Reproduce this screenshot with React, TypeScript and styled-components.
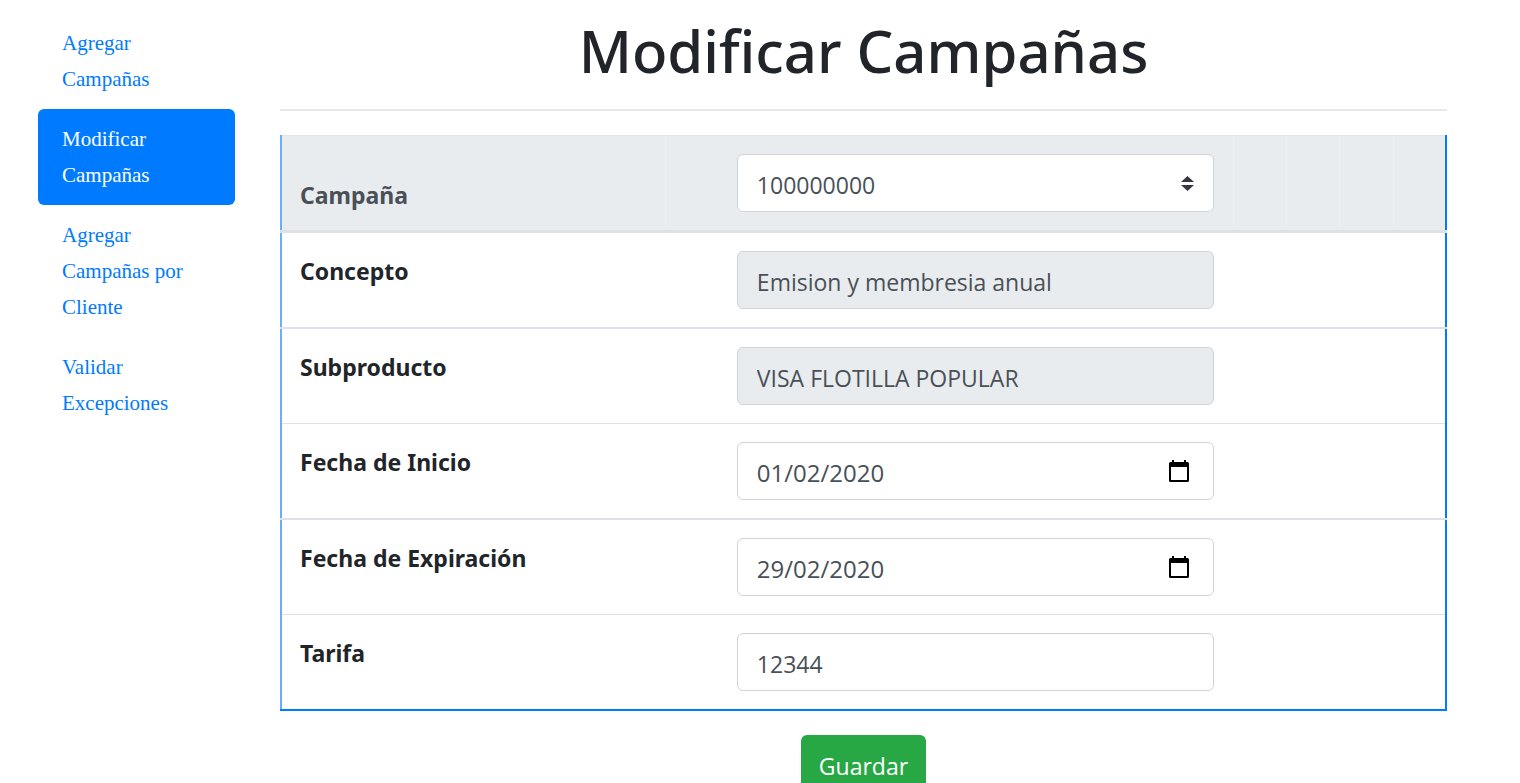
import React from "react";
import styled, { createGlobalStyle, css } from "styled-components";

const GlobalStyle = createGlobalStyle`
  *, *::before, *::after { box-sizing: border-box; }
  body {
    margin: 0;
    background: #fff;
    color: #212529;
    font-family: "Segoe UI", "Open Sans", sans-serif;
    font-size: 23px;
    line-height: 36px;
  }
`;

const Page = styled.div`
  display: flex;
  align-items: flex-start;
  gap: 45px;
  padding: 13px 73px 24px 38px;
`;

const Sidebar = styled.nav`
  display: flex;
  flex-direction: column;
  flex: 0 0 197px;
  font-family: "Times New Roman", "Liberation Serif", serif;
  font-size: 21px;
`;

const NavLink = styled.a<{ $active?: boolean }>`
  padding: 12px 24px;
  border-radius: 6px;
  color: ${(p) => (p.$active ? "#fff" : "#007bff")};
  background: ${(p) => (p.$active ? "#007bff" : "transparent")};
  text-decoration: none;
`;

const Main = styled.main`
  flex: 1;
  min-width: 0;
`;

const Title = styled.h1`
  margin: 0;
  padding-bottom: 20px;
  border-bottom: 2px solid #e9e9ea;
  font-family: "Segoe UI", "Noto Sans", sans-serif;
  font-size: 58px;
  font-weight: 500;
  line-height: 76px;
  text-align: center;
`;

const Form = styled.form`
  margin-top: 24px;
`;

const FormTable = styled.table`
  width: 100%;
  table-layout: fixed;
  border-collapse: collapse;
  border: 2px solid #007bff;
  border-top: 0;
  border-left-color: #6aadfb;
`;

const Column = styled.col<{ $share?: number }>`
  width: ${(p) => (p.$share ? `${p.$share}%` : "auto")};
`;

const HeadRow = styled.tr`
  background: #e9ecef;
  color: #495057;

  & > * {
    border-top: 1px solid #e4e7ea;
    border-bottom: 3px solid #dee2e6;
    vertical-align: bottom;
  }

  & > :nth-child(2),
  & > :nth-child(n + 4) {
    box-shadow: inset 1px 0 #edf0f2;
  }
`;

const BodyRow = styled.tr<{ $line: number }>`
  & > * {
    vertical-align: top;
    ${(p) => p.$line > 0 && css`border-bottom: ${p.$line}px solid #dee2e6;`}
  }
`;

const LabelCell = styled.th`
  padding: 18px;
  font-family: "Segoe UI", "Noto Sans", sans-serif;
  font-weight: 700;
  line-height: 40px;
  text-align: left;
`;

const HeadLabelCell = styled(LabelCell)`
  padding-bottom: 15px;
`;

const Cell = styled.td`
  padding: 18px 19px;
`;

const Spacer = styled.td`
  padding: 0;
`;

const Control = styled.div`
  position: relative;
`;

const fieldStyle = css`
  display: block;
  width: 100%;
  height: 58px;
  margin: 0;
  padding: 4px 19px 0;
  border: 1px solid #ced4da;
  border-radius: 6px;
  background: #fff;
  color: #495057;
  font: inherit;
`;

const Field = styled.input<{ $date?: boolean }>`
  ${fieldStyle}
  ${(p) =>
    p.$date &&
    css`
      padding-top: 2px;
      font-size: 24px;
    `}
  &:disabled { background: #e9ecef; }
`;

const Select = styled.select`
  ${fieldStyle}
  appearance: none;
`;

const SelectArrows = styled.svg`
  position: absolute;
  top: 22px;
  right: 20px;
  pointer-events: none;
`;

const CalendarButton = styled.button`
  position: absolute;
  top: 18px;
  right: 25px;
  display: flex;
  padding: 0;
  border: 0;
  background: none;
  cursor: pointer;
`;

const Actions = styled.div`
  display: flex;
  justify-content: center;
  margin-top: 24px;
`;

const SaveButton = styled.button`
  height: 58px;
  padding: 4px 18px 0;
  border: 0;
  border-radius: 6px;
  background: #28a745;
  color: #fff;
  font: inherit;
`;

const links = [
  { text: "Agregar Campañas" },
  { text: "Modificar Campañas", active: true },
  { text: "Agregar Campañas por Cliente" },
  { text: "Validar Excepciones" },
];

type FieldRow = {
  id: string;
  label: string;
  value: string;
  line: number;
  disabled?: boolean;
  date?: boolean;
};

const rows: FieldRow[] = [
  { id: "concepto", label: "Concepto", value: "Emision y membresia anual", line: 2, disabled: true },
  { id: "subproducto", label: "Subproducto", value: "VISA FLOTILLA POPULAR", line: 1, disabled: true },
  { id: "inicio", label: "Fecha de Inicio", value: "01/02/2020", line: 2, date: true },
  { id: "expiracion", label: "Fecha de Expiración", value: "29/02/2020", line: 1, date: true },
  { id: "tarifa", label: "Tarifa", value: "12344", line: 0 },
];

function CalendarIcon() {
  return (
    <svg width="20" height="22" viewBox="0 0 20 22" aria-hidden="true">
      <path
        fill="#000"
        fillRule="evenodd"
        d="M3 0h2v2h10V0h2v2h1.500Q20 2 20 3.500V20.500Q20 22 18.500 22H1.500Q0 22 0 20.500V3.500Q0 2 1.500 2H3ZM2 7V20H18V7Z"
      />
    </svg>
  );
}

export default function App() {
  return (
    <>
      <GlobalStyle />
      <Page>
        <Sidebar>
          {links.map((l) => (
            <NavLink key={l.text} href="#" $active={l.active}>
              {l.text}
            </NavLink>
          ))}
        </Sidebar>
        <Main>
          <Title>Modificar Campañas</Title>
          <Form>
            <FormTable>
              <colgroup>
                <Column $share={33} />
                <Column $share={4.5} />
                <Column $share={44.2} />
                <Column />
                <Column />
                <Column />
                <Column />
              </colgroup>
              <thead>
                <HeadRow>
                  <HeadLabelCell>
                    <label htmlFor="campana">Campaña</label>
                  </HeadLabelCell>
                  <Spacer />
                  <Cell>
                    <Control>
                      <Select id="campana" defaultValue="100000000">
                        <option>100000000</option>
                      </Select>
                      <SelectArrows width="13" height="16" viewBox="0 0 13 16" aria-hidden="true">
                        <path fill="#343a40" d="M0 6 6.500 0 13 6ZM0 9H13L6.500 15Z" />
                      </SelectArrows>
                    </Control>
                  </Cell>
                  <Spacer />
                  <Spacer />
                  <Spacer />
                  <Spacer />
                </HeadRow>
              </thead>
              <tbody>
                {rows.map((r) => (
                  <BodyRow key={r.id} $line={r.line}>
                    <LabelCell scope="row">
                      <label htmlFor={r.id}>{r.label}</label>
                    </LabelCell>
                    <Spacer />
                    <Cell>
                      <Control>
                        <Field
                          id={r.id}
                          type="text"
                          defaultValue={r.value}
                          disabled={r.disabled}
                          $date={r.date}
                        />
                        {r.date && (
                          <CalendarButton type="button" aria-label={`Elegir ${r.label}`}>
                            <CalendarIcon />
                          </CalendarButton>
                        )}
                      </Control>
                    </Cell>
                    <Spacer />
                    <Spacer />
                    <Spacer />
                    <Spacer />
                  </BodyRow>
                ))}
              </tbody>
            </FormTable>
            <Actions>
              <SaveButton type="button">Guardar</SaveButton>
            </Actions>
          </Form>
        </Main>
      </Page>
    </>
  );
}
